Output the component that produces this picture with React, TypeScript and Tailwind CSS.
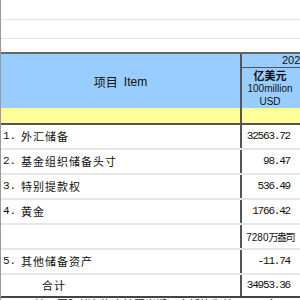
import React from 'react';

const rows = [
  { no: '1.', name: '外汇储备', value: '32563.72' },
  { no: '2.', name: '基金组织储备头寸', value: '98.47' },
  { no: '3.', name: '特别提款权', value: '536.49' },
  { no: '4.', name: '黄金', value: '1766.42' },
  { no: '', name: '', value: '' },
  { no: '5.', name: '其他储备资产', value: '-11.74' },
];

const cjk = "font-['Noto_Sans_CJK_SC','DejaVu_Sans',sans-serif]";
const mono = "font-['Liberation_Mono','Noto_Sans_CJK_SC',monospace]";
const sans = "font-['Liberation_Sans','Noto_Sans_CJK_SC',sans-serif]";

export default function App() {
  return (
    <div className="w-[300px] h-[300px] overflow-hidden bg-white border-l border-[#9a9a9a] text-[#111]">
      {/* blank rows above the table */}
      <div className="h-[20px] border-b border-[#e4e4e4]" />
      <div className="h-[19px] border-b border-[#e4e4e4]" />
      <div className="h-[15px] border-b-2 border-[#666]" />

      {/* header */}
      <div className="flex h-[54px] bg-[#99ccff]">
        <div className={`w-[241px] shrink-0 border-r-2 border-[#555] flex items-center justify-center gap-[6px] text-[12px] pt-[2px] ${sans}`}>
          <span className={cjk}>项目</span>
          <span>Item</span>
        </div>
        <div className="flex-1 flex flex-col min-w-0">
          <div className={`h-[14px] border-b border-[#555] overflow-hidden whitespace-nowrap pl-[40px] text-[11px] leading-[13px] ${sans}`}>
            2024年末
          </div>
          <div className={`flex-1 flex flex-col items-center justify-center pr-[2px] text-[10px] leading-[13px] ${sans}`}>
            <span className={`font-bold text-[11px] ${cjk}`}>亿美元</span>
            <span>100million</span>
            <span>USD</span>
          </div>
        </div>
      </div>

      {/* yellow band */}
      <div className="flex h-[17px] bg-[#ffff99] border-b-2 border-[#555]">
        <div className="w-[241px] shrink-0 border-r-2 border-[#555]" />
        <div className="flex-1" />
      </div>

      {rows.map((r, i) => (
        <div key={i} className="flex h-[25px] border-b-2 border-[#e6e6e6]">
          <div className={`w-[241px] shrink-0 border-r-2 border-[#555] flex items-center pl-[2px] text-[11px] ${cjk}`}>
            {r.no && <span className={`w-[18px] ${mono}`}>{r.no}</span>}
            <span className="tracking-[1px]">{r.name}</span>
          </div>
          <div className={`flex-1 flex items-center justify-end pr-[10px] text-[11px] tracking-[-1.2px] whitespace-nowrap ${mono}`}>
            {r.value === '' ? (
              <span className={`-mr-[4px] text-[10px] tracking-normal ${sans}`}>
                7280<span className={`tracking-[-1.5px] ${cjk}`}>万盎司</span>
              </span>
            ) : (
              r.value
            )}
          </div>
        </div>
      ))}

      {/* total */}
      <div className="flex h-[23px] border-b-2 border-[#444]">
        <div className={`w-[241px] shrink-0 border-r-2 border-[#555] flex items-center pl-[41px] text-[11px] tracking-[1px] ${cjk}`}>
          合计
        </div>
        <div className={`flex-1 flex items-center justify-end pr-[10px] text-[11px] tracking-[-1.2px] ${mono}`}>
          34953.36
        </div>
      </div>

      <div className={`pl-[34px] text-[11px] leading-[12px] whitespace-nowrap ${cjk}`}>
        注：国际储备资产按照当期汇率折算为美元，四舍五入
      </div>
    </div>
  );
}
